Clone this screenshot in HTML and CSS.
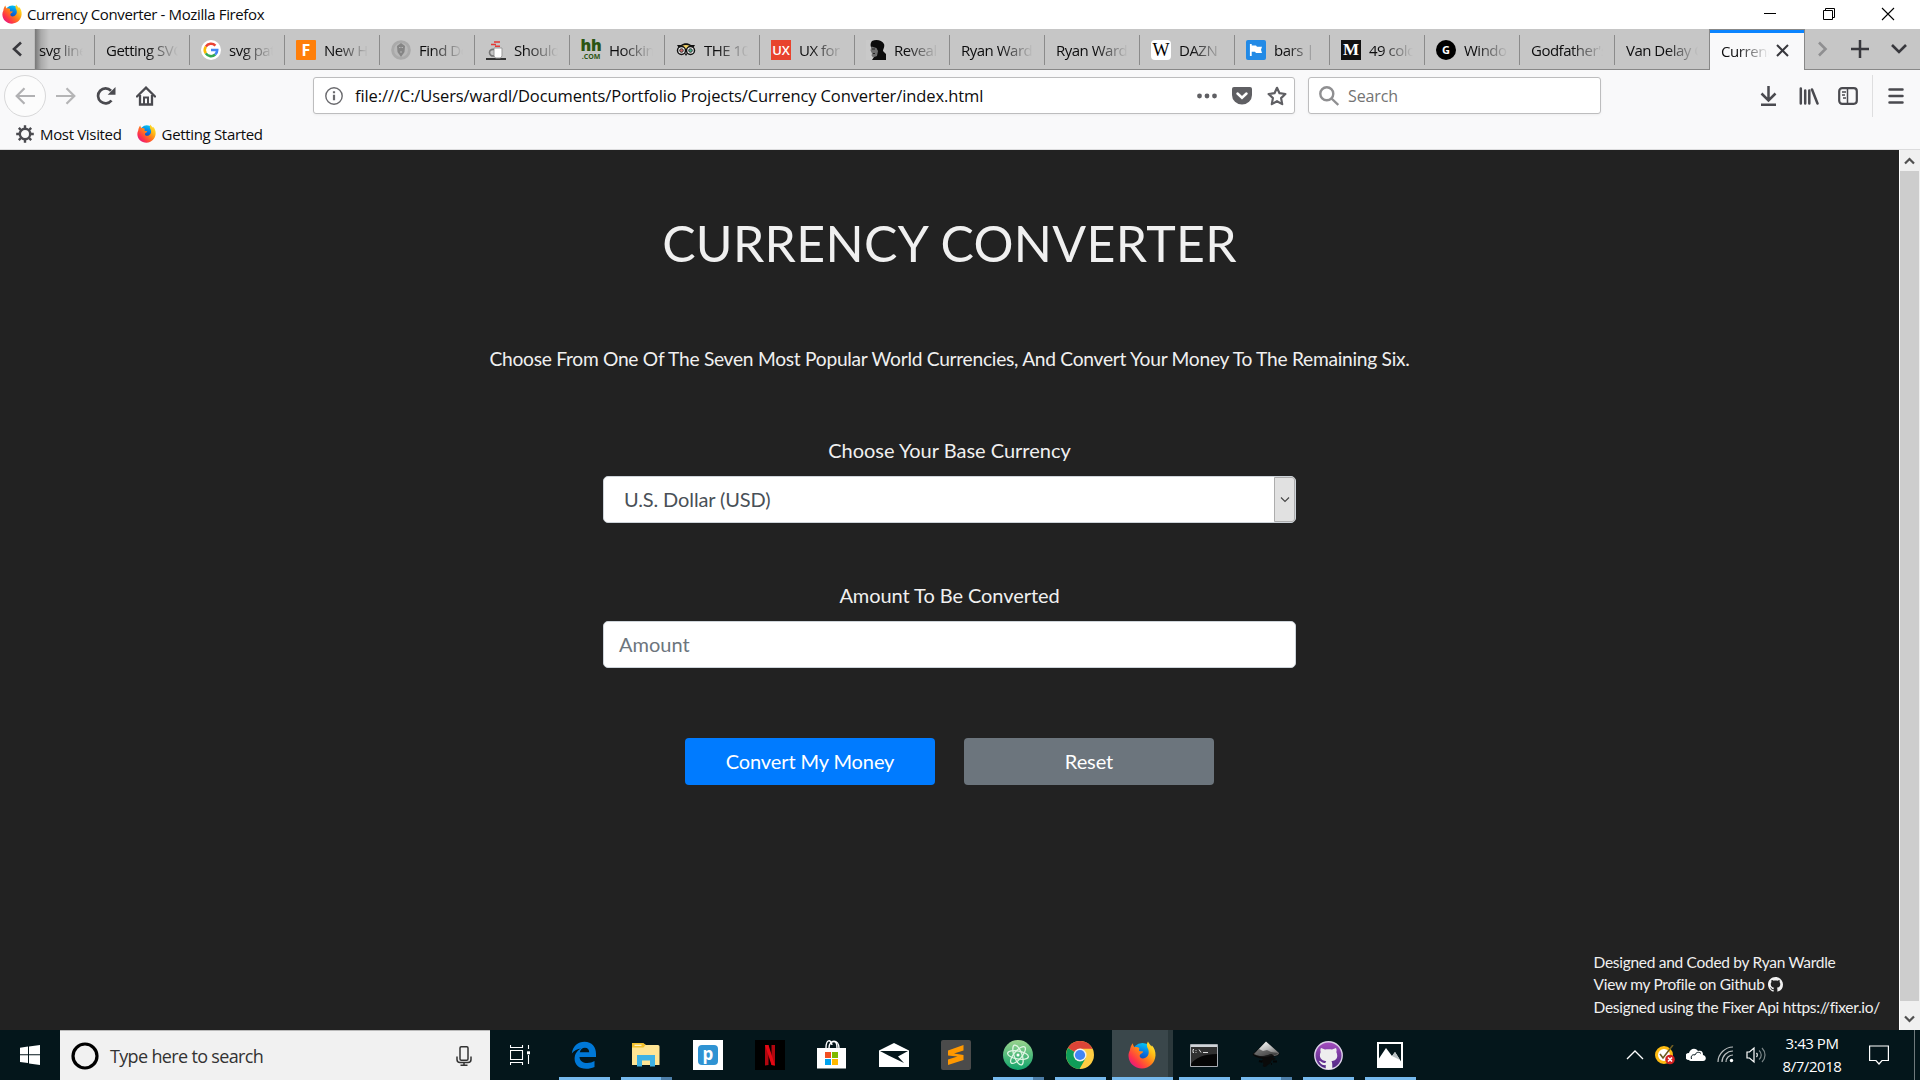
FILE: index.html
```html
<!DOCTYPE html>
<html lang="en">
<head>
<meta charset="utf-8">
<title>Currency Converter</title>
<link rel="stylesheet" href="styles.css">
</head>
<body>
<svg class="defs" width="0" height="0">
  <defs>
    <linearGradient id="flame" x1="1" y1="0" x2="0.1" y2="0.9">
      <stop offset="0" stop-color="#fff44f"/><stop offset=".3" stop-color="#ffc217"/><stop offset=".55" stop-color="#ff7b1c"/><stop offset=".8" stop-color="#ff3647"/><stop offset="1" stop-color="#e31587"/>
    </linearGradient>
    <linearGradient id="globe" x1=".7" y1="0" x2=".4" y2="1"><stop offset="0" stop-color="#00ccf5"/><stop offset=".5" stop-color="#0a6fe0"/><stop offset="1" stop-color="#20308f"/></linearGradient>
    <linearGradient id="atomg" x1="0" y1="0" x2="0" y2="1"><stop offset="0" stop-color="#9bd48e"/><stop offset="1" stop-color="#0fa36b"/></linearGradient>
    <linearGradient id="ghg" x1="0" y1="0" x2="0" y2="1"><stop offset="0" stop-color="#a64ec0"/><stop offset="1" stop-color="#4a2580"/></linearGradient>
    <linearGradient id="inkg" x1=".2" y1="0" x2=".9" y2="1"><stop offset="0" stop-color="#fff"/><stop offset=".5" stop-color="#bbb"/><stop offset="1" stop-color="#555"/></linearGradient>
  </defs>
  <symbol id="firefox" viewBox="0 0 28 28">
    <circle cx="14.5" cy="12.5" r="10.5" fill="url(#globe)"/>
    <path fill="url(#flame)" d="M1.8 9.500C2.200 6.500 3.200 4 4.800 2.200 5 4 5.600 5.200 6.600 6.200 8.300 5.700 10 6 11.300 7L11 10l4.200.6c-.2 1.700-2.200 2-3.400 3.400-.8 2.800 2.600 4.400 5.600 2.800 3.800-1.800 4.200-6.500 2-10C18.600 4.500 18.700 2.500 20 .6c.7 2 2.200 3 3.600 5l.2-1.400C26.500 7 27.700 10.500 27.500 14.500 27 22 21.300 27.500 14 27.500 6.500 27.500.5 22 .5 14.800c0-2 .5-3.800 1.300-5.300z"/>
  </symbol>
  <symbol id="octocat" viewBox="0 0 16 16"><path d="M8 0C3.580 0 0 3.580 0 8c0 3.540 2.290 6.530 5.470 7.590.4.070.55-.17.55-.38 0-.19-.01-.82-.01-1.490-2.010.37-2.530-.49-2.690-.94-.09-.23-.48-.94-.82-1.130-.28-.15-.68-.52-.01-.53.63-.01 1.080.58 1.230.82.72 1.210 1.870.87 2.330.66.07-.52.28-.87.51-1.070-1.780-.2-3.640-.89-3.640-3.950 0-.87.31-1.590.82-2.150-.08-.2-.36-1.020.08-2.120 0 0 .67-.21 2.200.82.64-.18 1.320-.27 2-.27s1.360.09 2 .27c1.530-1.040 2.200-.82 2.200-.82.44 1.100.16 1.920.08 2.120.51.56.82 1.270.82 2.150 0 3.070-1.870 3.750-3.650 3.950.29.25.54.73.54 1.480 0 1.070-.01 1.930-.01 2.200 0 .21.15.46.55.38A8.010 8.010 0 0 0 16 8c0-4.420-3.580-8-8-8z"/></symbol>
</svg>

<header class="titlebar">
  <svg class="ico20"><use href="#firefox"/></svg>
  <span class="window-title">Currency Converter - Mozilla Firefox</span>
  <div class="window-controls">
    <svg width="14" height="14"><path d="M1 6.500H13" stroke="#000"/></svg>
    <svg width="14" height="14" fill="none" stroke="#000"><path d="M1.500 3.500h9v9h-9zM3.500 3.500v-2h9v9h-2"/></svg>
    <svg width="14" height="14"><path d="M1 1L13 13M13 1L1 13" stroke="#000" stroke-width="1.100"/></svg>
  </div>
</header>

<nav class="tabs">
  <div class="tab-scroll-left"><svg width="12" height="16" fill="none" stroke="#38383d" stroke-width="2.600"><path d="M10 1.500L3 8l7 6.500"/></svg></div>
  <div class="tab first"><span class="label">svg line</span></div>
  <div class="tab"><span class="label">Getting SVG</span></div>
  <div class="tab"><svg class="ico20" viewBox="0 0 20 20"><circle cx="10" cy="10" r="10" fill="#fff"/><g fill="none" stroke-width="2.600"><path d="M4.800 6.600A6.200 6.200 0 0 1 14.400 5.600" stroke="#ea4335"/><path d="M4.800 13.400a6.200 6.200 0 0 1 0-6.800" stroke="#fbbc05"/><path d="M14.200 14.500a6.200 6.200 0 0 1-9.400-1.100" stroke="#34a853"/><path d="M10 10h6.200c0 2-.7 3.400-2 4.500" stroke="#4285f4"/></g></svg><span class="label">svg path</span></div>
  <div class="tab"><span class="fav fav-f">F</span><span class="label">New Ho</span></div>
  <div class="tab"><svg class="ico20" viewBox="0 0 20 20"><circle cx="10" cy="10" r="9.800" fill="#aaa"/><circle cx="10" cy="10" r="7" fill="#b8b8b8"/><path d="M10 3l4 3-.5 6L10 17l-3.500-5L6 6z" fill="#858585"/><path d="M8 7.500h1.500M10.500 7.500H12M9 12h2" stroke="#b5b5b5"/></svg><span class="label">Find Do</span></div>
  <div class="tab"><svg class="ico20" viewBox="0 0 20 20"><path d="M0 19h20" stroke="#333" stroke-width="2"/><path d="M8 8h8v8l-1.500 2h-5L8 16z" fill="#fff" stroke="#999"/><path d="M8 9.500c-6-1-6 7 0 6.500" fill="none" stroke="#777" stroke-width="1.600"/><path d="M8 2h6M5 4.500h5M9 6.200h5" stroke="#e53935" stroke-width="1.500"/></svg><span class="label">Should</span></div>
  <div class="tab"><span class="fav fav-hh"><b>hh</b><i>.COM</i></span><span class="label">Hocking</span></div>
  <div class="tab"><svg class="ico20" viewBox="0 0 20 20"><path d="M1 5h4c3-2.500 7-2.500 10 0h4l-1.500 2.500h-15z" fill="#111"/><path d="M6 6c2.500-1.500 5.500-1.500 8 0l-4 5z" fill="#f5d469"/><g fill="#eee" stroke="#111" stroke-width="1.500"><circle cx="5.500" cy="10.500" r="4"/><circle cx="14.500" cy="10.500" r="4"/></g><path d="M8.500 13.500h3L10 16z" fill="#111"/><circle cx="5.500" cy="10.500" r="1.800" fill="#c66" stroke="#333"/><circle cx="14.500" cy="10.500" r="1.800" fill="#4a8" stroke="#333"/></svg><span class="label">THE 10</span></div>
  <div class="tab"><span class="fav fav-ux">UX</span><span class="label">UX for b</span></div>
  <div class="tab"><svg class="ico20" viewBox="0 0 20 20"><path d="M0 0h20v20H0z" fill="#c9c9c9"/><path d="M6 1c4-2 10-1 12 3 1 3-1 5-1 7l3 3v6H6l2-3-1-2 1-4-3-4c-1-2 0-5 1-6z" fill="#0c0c0c"/><path d="M5.500 6.500l5 1.500 1.500 3-1 5-4 1.500-1.500-2 .5-2-1.500-3z" fill="#707070"/><path d="M6 9h3M7 13.500h2" stroke="#222"/></svg><span class="label">Reveal</span></div>
  <div class="tab"><span class="label">Ryan Wardle</span></div>
  <div class="tab"><span class="label">Ryan Wardle</span></div>
  <div class="tab"><span class="fav fav-w">W</span><span class="label">DAZN</span></div>
  <div class="tab"><svg class="ico20" viewBox="0 0 20 20"><rect width="20" height="20" rx="2" fill="#228ae6"/><path d="M4.800 4v12" stroke="#fff" stroke-width="1.800"/><path d="M5 5.500h5l1 1.300h5l-1 3 1 3.200h-6l-1-1.200H5z" fill="#fff"/></svg><span class="label">bars | F</span></div>
  <div class="tab"><span class="fav fav-m">M</span><span class="label">49 colo</span></div>
  <div class="tab"><span class="fav fav-g">G</span><span class="label">Windo</span></div>
  <div class="tab"><span class="label">Godfather's</span></div>
  <div class="tab"><span class="label">Van Delay C</span></div>
  <div class="tab active"><span class="label">Currency</span><svg width="13" height="13"><path d="M1 1L12 12M12 1L1 12" stroke="#38383d" stroke-width="2"/></svg></div>
  <div class="tab-tools">
    <svg width="12" height="16" fill="none" stroke="#8f8f91" stroke-width="2.600"><path d="M2 1.500L8.500 8 2 14.500"/></svg>
    <svg width="18" height="18" stroke="#38383d" stroke-width="2.500"><path d="M0 9h18M9 0v18"/></svg>
    <svg width="16" height="12" fill="none" stroke="#38383d" stroke-width="2.600"><path d="M1 2l7 7 7-7"/></svg>
  </div>
</nav>

<section class="toolbar">
  <div class="nav-buttons">
    <div class="back"><svg width="20" height="18" fill="none" stroke="#b1b1b3" stroke-width="2.200"><path d="M20 9H2M9.500 1.200L1.700 9l7.800 7.800"/></svg></div>
    <svg width="20" height="18" fill="none" stroke="#b5b5b6" stroke-width="2.200"><path d="M0 9h18M10.500 1.200L18.300 9l-7.800 7.800"/></svg>
    <svg width="20" height="18" viewBox="0 0 20 18" fill="none" stroke="#4a4a4f" stroke-width="2.700"><path d="M15.500 13.500A7.500 7.500 0 1 1 15 3.700"/><path d="M19.500 0v7.800H11.700z" fill="#4a4a4f" stroke="none"/></svg>
    <svg width="20" height="20" viewBox="0 0 20 20" fill="none" stroke="#4a4a4f" stroke-width="2.300"><path d="M1 10.500L10 1.600l9 8.900" stroke-linecap="round"/><path d="M4 9v9.500h12V9"/><path d="M8 18v-6.500h4V18" stroke-width="2"/></svg>
  </div>
  <div class="urlbar">
    <svg width="18" height="18" fill="none" stroke="#6a6a6e" stroke-width="1.400"><circle cx="9" cy="9" r="8.200"/><path d="M9 7.800v5.400M9 4.300v2" stroke-width="2.200"/></svg>
    <span class="url">file:///C:/Users/wardl/Documents/Portfolio Projects/Currency Converter/index.html</span>
    <div class="url-actions">
      <svg width="20" height="20" fill="#5f5f63"><circle cx="2.500" cy="10" r="2.400"/><circle cx="10" cy="10" r="2.400"/><circle cx="17.500" cy="10" r="2.400"/></svg>
      <svg width="20" height="20"><path d="M2 1h16a2 2 0 0 1 2 2v6a10 9.500 0 0 1-20 0V3a2 2 0 0 1 2-2z" fill="#5f5f63"/><path d="M5.500 7.500l4.500 4.200 4.500-4.200" fill="none" stroke="#fff" stroke-width="2.500" stroke-linecap="round"/></svg>
      <svg width="20" height="20"><path d="M10 1.800l2.500 5.400 5.900.8-4.300 4.100 1.100 6L10 15.200l-5.200 2.900 1.100-6L1.600 8l5.900-.8z" fill="none" stroke="#5f5f63" stroke-width="2.200" stroke-linejoin="round"/></svg>
    </div>
  </div>
  <div class="searchbar">
    <svg width="20" height="20" fill="none" stroke="#8f8f91" stroke-width="2.400"><circle cx="7.800" cy="7.800" r="6.500"/><path d="M12.500 12.500l6.800 6.500"/></svg>
    <span>Search</span>
  </div>
  <div class="tools">
    <svg width="20" height="20" fill="none" stroke="#4a4a4f" stroke-width="2.500"><path d="M8.500 0v14M1.500 7.500l7 7 7-7M1 18.800h15" /></svg>
    <svg width="20" height="20" stroke="#4a4a4f" stroke-width="2.500" stroke-linecap="round"><path d="M1.800 2.500v15M6.200 4.500v13M10.300 4.500v13M13 3.500l5.500 14"/></svg>
    <svg width="20" height="18" fill="none" stroke="#4a4a4f" stroke-width="2.200"><rect x="1.200" y="1.200" width="17.600" height="15.600" rx="3"/><path d="M9.500 1v16" stroke-width="1.500"/><path d="M4 5h4M4 8h3M5 11h3" stroke-width="1.400"/></svg>
  </div>
  <div class="menu"><svg width="16" height="16" stroke="#4a4a4f" stroke-width="2.500" stroke-linecap="round"><path d="M1.500 1.500h13M1.500 8h13M1.500 14.500h13"/></svg></div>
</section>

<section class="bookmarks">
  <svg width="18" height="18" viewBox="0 0 18 18" fill="none" stroke="#4a4a4f"><circle cx="9" cy="9" r="5.200" stroke-width="2.400"/><g stroke-width="2.400"><path d="M9 .2v3M9 14.800v3M.2 9h3M14.800 9h3M2.800 2.800l2 2M13.200 13.200l2 2M15.200 2.800l-2 2M4.800 13.200l-2 2"/></g></svg>
  <span>Most Visited</span>
  <svg class="ico19"><use href="#firefox"/></svg>
  <span>Getting Started</span>
</section>

<main class="viewport">
  <div class="page">
    <h1>CURRENCY CONVERTER</h1>
    <p class="intro">Choose From One Of The Seven Most Popular World Currencies, And Convert Your Money To The Remaining Six.</p>
    <form class="form">
      <label>Choose Your Base Currency</label>
      <div class="field select"><span>U.S. Dollar (USD)</span><div class="drop"><svg width="10" height="8" fill="none" stroke="#444" stroke-width="1.100"><path d="M1 1.500l4 4 4-4"/></svg></div></div>
      <label class="second">Amount To Be Converted</label>
      <div class="field input"><span>Amount</span></div>
      <div class="buttons"><div class="btn primary">Convert My Money</div><div class="btn secondary">Reset</div></div>
    </form>
    <footer>
      <div>Designed and Coded by Ryan Wardle</div>
      <div>View my Profile on Github <svg width="15" height="15" fill="#f0f0f0"><use href="#octocat"/></svg></div>
      <div>Designed using the Fixer Api https://fixer.io/</div>
    </footer>
  </div>
  <div class="scrollbar">
    <svg width="20" height="21" fill="none" stroke="#505050" stroke-width="2.200"><path d="M5 13.500L9.500 9l4.500 4.500"/></svg>
    <div class="thumb"></div>
    <svg width="20" height="29" fill="none" stroke="#505050" stroke-width="2.200"><path d="M5 15.500L9.500 20l4.500-4.500"/></svg>
  </div>
</main>

<div class="taskbar">
  <div class="start"><svg width="20" height="20" fill="#fff"><path d="M0 2.700L8 1.600v7.700H0zM9 1.400L20 0v9.300H9zM0 10.300h8v7.800L0 17zM9 10.300h11V20L9 18.400z"/></svg></div>
  <div class="cortana">
    <svg width="28" height="28"><circle cx="14" cy="14" r="12" fill="none" stroke="#000" stroke-width="3.200"/></svg>
    <span>Type here to search</span>
    <svg width="16" height="20" fill="none" stroke="#333" stroke-width="1.500"><rect x="4" y=".8" width="8" height="13.500" rx="1.200"/><path d="M1 10.500v3c0 1.800 1.200 3 3 3h8c1.800 0 3-1.200 3-3v-3M8 16.500V19M4.500 19.200h7"/></svg>
  </div>
  <div class="taskview"><svg width="20" height="20" fill="none" stroke="#fff" stroke-width="1.100"><path d="M.5 5.500h12v9H.5zM.5 0v2.500h12V0M.5 20v-2.500h12V20M18.500 0v4M18.500 10v9"/><path d="M17 6.300h3v3h-3z" fill="#fff" stroke="none"/></svg></div>
  <div class="apps">
    <div class="app open"><svg width="26" height="28" viewBox="0 0 26 28"><path fill="#0078d7" d="M.8 12.500C1.800 5 7 .7 13.500.7 21 .7 25 6 25 12.700V16H8.500c.3 4.300 3.700 6 7.700 6 2.800 0 5.300-.8 7.300-2v6c-2.500 1.200-5.400 1.800-8.400 1.800C8 27.800 3.600 23.800 3.600 17.800c0-4.500 2.300-8.300 6.600-10.300C6.500 7.800 3 9.500.8 12.500zm8-1.200h9.400c0-2.800-1.500-4.600-4.300-4.600-2.700 0-4.500 1.900-5.100 4.600z"/></svg></div>
    <div class="app open multi"><svg width="28" height="24" viewBox="0 0 28 24"><path d="M0 1h12l2 1h12a1.500 1.500 0 0 1 1.500 1.500V22H0z" fill="#ffe594"/><path d="M0 0h11.500l2 2-2 2.500H0z" fill="#f4c22d"/><path d="M2.500 2.300h7" stroke="#fff6d8" stroke-width="1.200"/><path d="M5 23.500V12h18v11.500h-5v-6h-8v6z" fill="#3eb2e4"/></svg></div>
    <div class="app"><span class="tile tile-p"><b>p</b></span></div>
    <div class="app"><svg width="30" height="30"><path fill="#000" d="M0 0h30v30H0z"/><path fill="#b1060f" d="M10 5h3.500v20L10 25.500zM16.500 5H20v20.500l-3.500-.5z"/><path fill="#e50914" d="M10 5h3.500L20 25.500l-3.500-.5z"/></svg></div>
    <div class="app"><svg width="30" height="30"><path d="M0 8h29v20.500H0z" fill="#fff"/><path d="M9 8c0-9 5-9 6-3M12 8c0-9 10-9 10 0M15 2c4-2 5 2 5 6" fill="none" stroke="#fff" stroke-width="1.400"/><path d="M8 12h6v6H8z" fill="#f25022"/><path d="M15 12h6v6h-6z" fill="#7fba00"/><path d="M8 19h6v6H8z" fill="#00a4ef"/><path d="M15 19h6v6h-6z" fill="#ffb900"/></svg></div>
    <div class="app"><svg width="30" height="26"><path d="M0 8.500L15 1l15 7.500V25H0z" fill="#fff"/><path d="M1 9h28l-10 5.500 6 6.500L9.500 13.500z" fill="#04161b"/></svg></div>
    <div class="app"><svg width="30" height="30"><rect width="30" height="30" rx="2" fill="#4b4b4b"/><path fill="#ff9800" d="M7 10.500L22.500 5v5.500L13 13.500l9.500 1.500v5L7 25v-5.500l9.500-3L7 15.500z"/></svg></div>
    <div class="app open multi"><svg width="30" height="30" fill="none"><circle cx="15" cy="15" r="15" fill="url(#atomg)"/><g stroke="#dff5e3" stroke-width="1.300"><ellipse cx="15" cy="15" rx="10.500" ry="4" transform="rotate(10 15 15)"/><ellipse cx="15" cy="15" rx="10.500" ry="4" transform="rotate(70 15 15)"/><ellipse cx="15" cy="15" rx="10.500" ry="4" transform="rotate(130 15 15)"/></g><circle cx="15" cy="15" r="1.500" fill="#fff"/></svg></div>
    <div class="app open"><svg width="28" height="28"><circle cx="14" cy="14" r="14" fill="#ffcd42"/><path d="M14 14L1.900 7A14 14 0 0 1 26.200 7.200H14z" fill="#db4437"/><path d="M14 14L1.900 7A14 14 0 0 0 13.500 28l6-10.500z" fill="#0f9d58"/><path d="M14 7.200h12.200" stroke="#db4437"/><circle cx="14" cy="14" r="6.500" fill="#f1f1f1"/><circle cx="14" cy="14" r="5.100" fill="#4285f4"/></svg></div>
    <div class="app open current"><svg width="28" height="28"><use href="#firefox"/></svg></div>
    <div class="app open"><svg width="28" height="23"><path d="M.5.500h27v22H.5z" fill="#050505" stroke="#a8adb3"/><path d="M1 1h26v2H1z" fill="#d0d4d8"/><path d="M1 3h26v7C14 10 5 14 1 20z" fill="#303030"/><path d="M4 5.500h-1v3h1M6 6v.8M6 8v.8M9 5.500l2 3M13 8.500h5" stroke="#ddd" fill="none"/></svg></div>
    <div class="app open multi"><svg width="28" height="28"><path d="M14 .5L27 12c1.500 2-1 3-5 3.500-2 1 1 1.500 2 2.500-3 1.500-5 1-5 3 0 2-3 2-4 4-2 1.500-5 1-4-.5 1-2 0-3-2-3.500 0-2 2-2 2-3C7 17 1 15.500.8 13z" fill="#0a0a0a"/><path d="M14 .5L27 12c0 2-3 3-5 3-2-3-4-2-6-1-5 1-8 2-14-1z" fill="url(#inkg)"/><path d="M1 12.500l6-4.500 4 2 4-1 4 2 7 1c-2 3-5 2-8 3-5 2-14 1-17-2.500z" fill="#222" opacity=".55"/><path d="M7 20l3 .8M21 20.500h4M19 23h1" stroke="#050505" stroke-width="2"/></svg></div>
    <div class="app open"><svg width="29" height="29" viewBox="0 0 29 29"><circle cx="14.500" cy="14.500" r="13.700" fill="url(#ghg)" stroke="#dcd2e8" stroke-width="1.400"/><path fill="#eee" d="M7 7l4 1.500c2-.5 5-.5 7 0L22 7c.8 2 .7 3 .3 4 2.300 5 .5 8.500-4.800 9.200 1 1.300.8 4 .8 7.800h-6.600v-4c-4 .8-5.200-2-7-4.200 2.500 0 3 3 6.800 2 .1-.7.300-1.200.8-1.600C7 19.500 4.500 16 6.700 11 6.200 9.500 6.400 8 7 7z"/></svg></div>
    <div class="app open"><svg width="26" height="26"><path d="M1 1h24v24H1z" fill="#04161b" stroke="#fff" stroke-width="2"/><path d="M1 18l8-12 6 8 3-4 7 11v4H1z" fill="#fff"/><path d="M15 14l3-4 5 8-4-2z" fill="#b9c0c2"/></svg></div>
  </div>
  <div class="tray">
    <svg width="18" height="12" fill="none" stroke="#fff" stroke-width="1.300"><path d="M1 10l8-8 8 8"/></svg>
    <svg width="20" height="20" viewBox="0 0 20 20"><circle cx="9" cy="10" r="7.500" fill="#fff" stroke="#fdbb12" stroke-width="3"/><path d="M5 9l3 4L18 0" fill="none" stroke="#6d5b21" stroke-width="1.600"/><circle cx="15" cy="14.500" r="4.800" fill="#d32020"/><path d="M13 12.500l4 4m0-4l-4 4" stroke="#fff" stroke-width="1.600"/></svg>
    <svg width="20" height="14"><path d="M3 12a3.500 3.500 0 0 1 0-7C4 1 9-1 12 3c4-1 5 1 5 4 4 1 3.500 6 0 6H6c-2 0-3-.5-3-1z" fill="#fff"/><path d="M5.500 11c-1-3 1-5 3.500-4 1-3 4-3.500 6-1.500" fill="none" stroke="#04161b"/></svg>
    <svg width="18" height="18" fill="none" stroke="#e8e8e8" stroke-width="1.200"><path d="M1 16C1 8 8 1 16 1M5 16C5 10 10 5 16 5M9 16c0-4 3-7 7-7" opacity=".8"/><circle cx="14.500" cy="14.500" r="1.700" fill="#fff" stroke="none"/></svg>
    <svg width="20" height="18" fill="none" stroke="#fff" stroke-width="1.200"><path d="M1 6h2.500L8 2v14l-4.500-4H1z"/><path d="M10.500 7c1 1 1 3 0 4"/><path d="M13 4.500c3 2.500 3 6.500 0 9M16 2c4 4 4 10 0 14" stroke="#7c8688"/></svg>
    <div class="clock"><div>3:43 PM</div><div>8/7/2018</div></div>
    <svg class="notice" width="20" height="20" fill="none" stroke="#fff" stroke-width="1.200"><path d="M.6 1h18.800v14.500H13L10 19l-3-3.500H.6z"/></svg>
    <div class="show-desktop"></div>
  </div>
</div>
</body>
</html>
```
FILE: styles.css
```css
* { box-sizing: border-box; }
body {
  margin: 0; width: 1920px; height: 1080px; overflow: hidden;
  display: flex; flex-direction: column;
  font-family: "Open Sans", "Noto Sans", sans-serif; font-size: 15px; color: #0c0c0d; background: #fff;
}
svg { display: block; flex: none; }
.defs { position: absolute; }
.ico20 { width: 20px; height: 20px; flex: none; }
.ico19 { width: 19px; height: 19px; }
span, label, .clock, footer, h1, p { white-space: nowrap; }

.titlebar { height: 29px; flex: none; display: flex; align-items: center; padding: 0 25px 1px 2px; }
.window-title { margin-left: 5px; letter-spacing: -.37px; }
.window-controls { margin-left: auto; display: flex; gap: 45px; }

.tabs { height: 41px; flex: none; display: flex; background: #c6c6c6; border-bottom: 1px solid #888; }
.tab-scroll-left { width: 35px; display: flex; align-items: center; justify-content: center; background: #c9c9c9; border-right: 1px solid #bbb; }
.tab { width: 95px; height: 40px; display: flex; align-items: center; gap: 8px; padding: 2px 9px 0 12px; flex: none; background: linear-gradient(#8b8b8b, #8b8b8b) 0 6px / 1px 30px no-repeat; }
.tab.first { width: 59px; padding-left: 4px; background: linear-gradient(90deg, #777, #aaa 6px, #c6c6c6 14px); }
.label { flex: 1; min-width: 0; overflow: hidden; letter-spacing: -.5px; line-height: 22px; mask-image: linear-gradient(90deg, #000 calc(100% - 34px), transparent calc(100% - 2px)); }
.tab.active { height: 41px; width: 96px; background: #f9f9fa; border: 1px solid #888; border-width: 1px 1px 0; box-shadow: inset 0 3px #0a84ff; padding: 1px 15px 0 11px; gap: 5px; }
.active .label { letter-spacing: -.4px; }
.tab-tools { flex: 1; display: flex; align-items: center; padding-left: 12px; gap: 22px; }
.fav { width: 20px; height: 20px; flex: none; display: flex; align-items: center; justify-content: center; color: #fff; font-weight: 700; line-height: 20px; }
.fav-f { background: #ff7f0a; font-size: 16px; border-radius: 1px; }
.fav-hh { flex-direction: column; color: #2c5514; }
.fav-hh b { font-size: 16px; height: 12px; line-height: 11px; letter-spacing: -.3px; }
.fav-hh i { font-size: 7px; font-style: normal; height: 8px; line-height: 9px; }
.fav-ux { background: #e8432d; font-size: 13px; font-weight: 600; }
.fav-w { background: #fff; color: #000; border-radius: 4px; font: 18px/20px "Liberation Serif", serif; }
.fav-m { background: #111; font: 700 17px/20px "Liberation Serif", serif; }
.fav-g { background: #000; border-radius: 50%; font-size: 11px; }

.toolbar { height: 50px; flex: none; display: flex; align-items: center; padding: 1px 16px 0 4px; background: #f9f9fa; }
.nav-buttons { width: 309px; display: flex; align-items: center; gap: 20px; }
.back { width: 42px; height: 42px; border: 1px solid #d8d8d9; border-radius: 50%; background: #fcfcfc; display: flex; align-items: center; justify-content: center; margin-right: -10px; }
.urlbar, .searchbar { height: 37px; background: #fff; border: 1px solid #bdbdbe; border-radius: 3px; box-shadow: 0 1px 3px rgba(0,0,0,.05); display: flex; align-items: center; font-size: 16px; }
.urlbar { width: 982px; padding: 0 7px 0 11px; }
.url { margin-left: 12px; letter-spacing: -.1px; font-size: 16.500px; }
.url-actions { margin-left: auto; display: flex; gap: 15px; }
.searchbar { width: 293px; margin-left: 13px; padding-left: 10px; color: #737373; }
.searchbar span { margin-left: 9px; letter-spacing: -.1px; }
.tools { margin-left: auto; display: flex; gap: 19px; align-items: center; }
.menu { margin-left: 14px; border-left: 1px solid #dededf; height: 42px; width: 32px; display: flex; align-items: center; justify-content: flex-end; }
.bookmarks { height: 30px; flex: none; display: flex; align-items: center; padding: 0 0 2px 16px; background: #f9f9fa; border-bottom: 1px solid #dcdcdd; letter-spacing: -.33px; }
.bookmarks span { margin: 0 15px 0 6px; }

.viewport { height: 880px; flex: none; display: flex; background: #222; }
.page { width: 1899px; display: flex; flex-direction: column; align-items: center; font-family: Lato, sans-serif; color: #f0f0f0; padding-top: 63px; }
h1 { margin: 0; font-size: 50px; font-weight: 400; line-height: 60px; letter-spacing: .33px; }
.intro { margin: 71px 0 0; font-size: 19.200px; line-height: 30px; letter-spacing: -.27px; }
.form { width: 693px; display: flex; flex-direction: column; margin-top: 61px; font-size: 20px; line-height: 30px; }
.form label { text-align: center; margin-bottom: 11px; }
.form .second { margin-top: 57px; letter-spacing: -.07px; }
.field { height: 47px; background: #fff; border: 1px solid #ced4da; border-radius: 5px; display: flex; align-items: center; }
.field span { padding-bottom: 2px; }
.select { color: #495057; padding-left: 20px; justify-content: space-between; letter-spacing: -.12px; }
.drop { width: 21px; height: 45px; background: #e1e1e1; border: 1px solid #adadad; display: flex; align-items: center; justify-content: center; border-radius: 0 3px 3px 0; }
.input { color: #6c757d; padding-left: 15px; }
.buttons { display: flex; justify-content: center; gap: 29px; margin-top: 70px; }
.btn { width: 250px; height: 47px; padding-bottom: 2px; border-radius: 4px; color: #fff; display: flex; align-items: center; justify-content: center; letter-spacing: -.1px; }
.primary { background: #007bff; }
.secondary { background: #6c757d; }
footer { margin: auto 19px 12px auto; font-size: 15.500px; line-height: 22.500px; letter-spacing: -.29px; }
footer div { display: flex; align-items: center; gap: 3px; }
.scrollbar { width: 21px; display: flex; flex-direction: column; background: #f0f0f0; border-left: 1px solid #fff; }
.thumb { height: 830px; width: 19px; background: #cdcdcd; }

.taskbar { height: 50px; flex: none; display: flex; background: #04161b; color: #fff; }
.start { width: 60px; display: flex; align-items: center; justify-content: center; }
.cortana { width: 430px; background: #f1f1f1; border-top: 1px solid #b9b9b9; display: flex; align-items: center; padding: 0 18px 0 11px; color: #333; font-size: 18px; }
.cortana span { margin: 0 auto 0 11px; letter-spacing: -.66px; }
.taskview { width: 63px; display: flex; align-items: center; padding-left: 20px; }
.apps { display: flex; }
.app { width: 62px; height: 50px; display: flex; align-items: center; justify-content: center; }
.app.open { background: linear-gradient(#76b9ed, #76b9ed) 6px 47px / 51px 3px no-repeat; }
.app.multi { background: linear-gradient(90deg, #76b9ed 40px, #4d7ea8 40px) 6px 47px / 51px 3px no-repeat; }
.app.current { background: linear-gradient(#76b9ed, #76b9ed) 1px 47px / 61px 3px no-repeat, linear-gradient(90deg, transparent 1px, #3a474b 1px, #3a474b 57px, #2b383b 57px); }
.tile-p { width: 30px; height: 30px; background: #fff; display: flex; align-items: center; justify-content: center; }
.tile-p b { width: 20px; height: 20px; border-radius: 4px; background: #2f93d3; font-size: 17px; line-height: 17px; text-align: center; }
.tray { margin-left: auto; display: flex; align-items: center; gap: 11px; }
.clock { width: 74px; text-align: center; line-height: 23px; letter-spacing: -.45px; font-size: 15px; margin-left: -2px; }
.notice { margin: 0 14px 0 9px; }
.show-desktop { width: 6px; height: 50px; border-left: 1px solid #6f797c; }
```
